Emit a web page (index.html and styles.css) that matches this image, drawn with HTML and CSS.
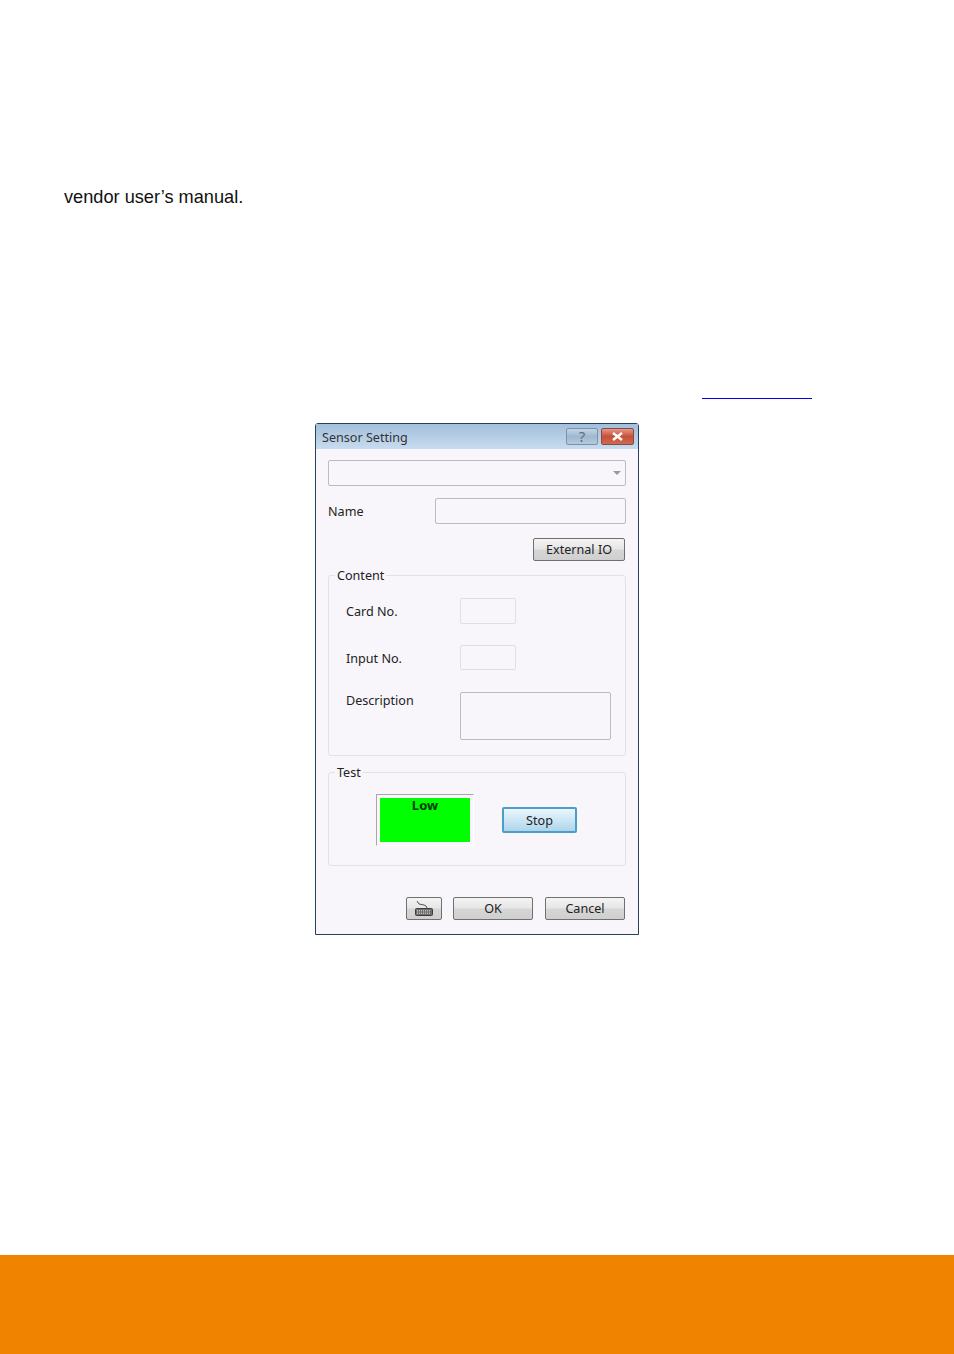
FILE: index.html
```html
<!DOCTYPE html>
<html lang="en">
<head>
  <meta charset="UTF-8" />
  <title>Sensor Setting</title>
  <link rel="stylesheet" href="styles.css">
</head>
<body>
  <div class="page">
    <p class="manual-text">vendor user’s manual.</p>
    <div class="link-row"><a class="blank-link" href="#"></a></div>

    <div class="dialog">
      <div class="title-bar">
        <span class="title-text">Sensor Setting</span>
        <div class="title-btns">
          <span class="help-btn">?</span>
          <span class="close-btn">
            <svg width="13" height="9" viewBox="0 0 13 9"><path d="M2 1 L11 8 M11 1 L2 8" stroke="#fff" stroke-width="2.4" fill="none"/></svg>
          </span>
        </div>
      </div>

      <div class="dialog-body">
        <div class="combo"><span class="combo-arrow"></span></div>

        <div class="name-row">
          <label class="name-label">Name</label>
          <div class="field name-field"></div>
        </div>

        <div class="external-row">
          <button class="win-btn external-btn">External IO</button>
        </div>

        <fieldset class="group content-group">
          <legend>Content</legend>
          <div class="content-row card-row">
            <label>Card No.</label>
            <div class="field small-field"></div>
          </div>
          <div class="content-row input-row">
            <label>Input No.</label>
            <div class="field small-field"></div>
          </div>
          <div class="content-row desc-row">
            <label>Description</label>
            <div class="field desc-field"></div>
          </div>
        </fieldset>

        <fieldset class="group test-group">
          <legend>Test</legend>
          <div class="test-row">
            <div class="status-box"><div class="status-green">Low</div></div>
            <button class="win-btn stop-btn">Stop</button>
          </div>
        </fieldset>

        <div class="bottom-btns">
          <button class="win-btn key-btn">
            <svg width="20" height="17" viewBox="0 0 20 17">
              <path d="M3 1 L5 4 L10 5 L12 6 L13 8" stroke="#555" stroke-width="1" fill="none"/>
              <rect x="1.5" y="8.5" width="17" height="7" rx="1" fill="#6f6f6f" stroke="#3d3d3d"/>
              <path d="M3 10.5 H17 M3 12 H17 M3 13.5 H17" stroke="#d0d0d0" stroke-width="0.8" stroke-dasharray="1 1"/>
            </svg>
          </button>
          <button class="win-btn ok-btn">OK</button>
          <button class="win-btn cancel-btn">Cancel</button>
        </div>
      </div>
    </div>

    <div class="footer-bar"></div>
  </div>
</body>
</html>
```

FILE: styles.css
```css
* {
  box-sizing: border-box;
}

body {
  margin: 0;
  background: #fff;
  font-family: "Liberation Sans", Arial, sans-serif;
}

.page {
  width: 954px;
  height: 1354px;
  display: flex;
  flex-direction: column;
  overflow: hidden;
}

.manual-text {
  margin: 187px 0 0 64px;
  font-size: 18.2px;
  line-height: 20px;
  color: #111;
}

.link-row {
  height: 192px;
  padding-left: 702px;
  padding-top: 191px;
}

.blank-link {
  display: block;
  width: 110px;
  height: 1px;
  background: #0000e0;
}

.dialog {
  width: 324px;
  height: 512px;
  margin: 24px 0 0 315px;
  border: 1px solid #24405c;
  border-radius: 3px 3px 0 0;
  background: #f8f6fa;
  font-family: "Noto Sans", Tahoma, sans-serif;
  font-size: 12.6px;
  color: #222;
}

.title-bar {
  height: 25px;
  display: flex;
  align-items: center;
  justify-content: space-between;
  padding: 0 4px 0 6px;
  background: linear-gradient(to bottom, #a3bfdc, #bcd3e9 70%, #c9dcee);
}

.title-text {
  padding-top: 2px;
  color: #333;
}

.title-btns {
  display: flex;
  gap: 3px;
  margin-top: -1px;
}

.help-btn,
.close-btn {
  height: 17px;
  display: flex;
  align-items: center;
  justify-content: center;
  border-radius: 2px;
}

.help-btn {
  width: 32px;
  border: 1px solid #7d92a8;
  background: linear-gradient(to bottom, #c3d5e6, #9fb8cf 50%, #b4cadf);
  color: #5b6f82;
  font-size: 15px;
}

.close-btn {
  width: 33px;
  border: 1px solid #8a4a40;
  background: linear-gradient(to bottom, #e29a8c, #c8503a 50%, #cc6a52);
}

.dialog-body {
  padding: 11px 12px 0;
}

.combo,
.field {
  border: 1px solid #bdbbbf;
  border-radius: 2px;
  background: #f8f6fa;
}

.combo {
  height: 26px;
  display: flex;
  align-items: center;
  justify-content: flex-end;
  padding-right: 4px;
}

.combo-arrow {
  width: 0;
  height: 0;
  border-left: 4px solid transparent;
  border-right: 4px solid transparent;
  border-top: 4px solid #9a9a9a;
}

.name-row {
  display: flex;
  align-items: center;
  justify-content: space-between;
  margin-top: 12px;
}

.name-field {
  width: 191px;
  height: 26px;
}

.external-row {
  display: flex;
  justify-content: flex-end;
  padding-right: 1px;
  margin-top: 14px;
}

.win-btn {
  padding: 0 0 1px;
  border: 1px solid #707070;
  border-radius: 2px;
  background: linear-gradient(to bottom, #f4f4f4, #e6e6e6 48%, #d6d6d6 52%, #cfcfcf);
  font-family: "Noto Sans", Tahoma, sans-serif;
  font-size: 12.6px;
  color: #222;
}

.external-btn {
  width: 92px;
  height: 23px;
}

.group {
  margin: 0;
  padding: 0;
  border: 1px solid #e3e1e5;
  border-radius: 3px;
  min-width: 0;
}

.group legend {
  margin-left: 6px;
  padding: 2px 2px 0;
  line-height: 18px;
  color: #222;
}

.content-group {
  height: 191px;
  margin-top: 4px;
}

.content-row {
  display: flex;
  padding-left: 17px;
}

.content-row label {
  width: 114px;
}

.card-row {
  align-items: center;
  margin-top: 13px;
}

.input-row {
  align-items: center;
  margin-top: 21px;
}

.input-row label {
  padding-top: 2px;
}

.desc-row {
  align-items: flex-start;
  margin-top: 22px;
}

.small-field {
  width: 56px;
  height: 26px;
  border-color: #e0dee3;
}

.input-row .small-field {
  height: 25px;
}

.desc-field {
  width: 151px;
  height: 48px;
}

.test-group {
  height: 104px;
  margin-top: 6px;
}

.test-row {
  display: flex;
  align-items: flex-start;
  padding-left: 47px;
  margin-top: 12px;
}

.status-box {
  width: 98px;
  height: 52px;
  padding: 3px;
  border-top: 1px solid #a8a8a8;
  border-left: 1px solid #a8a8a8;
  border-right: 1px solid #fff;
  border-bottom: 1px solid #fff;
}

.status-green {
  width: 90px;
  height: 44px;
  background: #00ff00;
  text-align: center;
  font-weight: 700;
  font-size: 13px;
  line-height: 15px;
  color: #0a3a0a;
}

.stop-btn {
  width: 75px;
  height: 26px;
  margin: 13px 0 0 28px;
  padding: 0;
  border: 2px solid #4a9fc8;
  background: linear-gradient(to bottom, #eaf6fc, #cde6f5 50%, #aed4ea);
}

.bottom-btns {
  display: flex;
  justify-content: flex-end;
  padding-right: 1px;
  margin-top: 31px;
}

.key-btn {
  width: 36px;
  height: 23px;
  display: flex;
  align-items: center;
  justify-content: center;
}

.ok-btn {
  width: 80px;
  height: 23px;
  margin-left: 11px;
}

.cancel-btn {
  width: 80px;
  height: 23px;
  margin-left: 12px;
}

.footer-bar {
  height: 99px;
  margin-top: auto;
  background: #f08300;
}
```
